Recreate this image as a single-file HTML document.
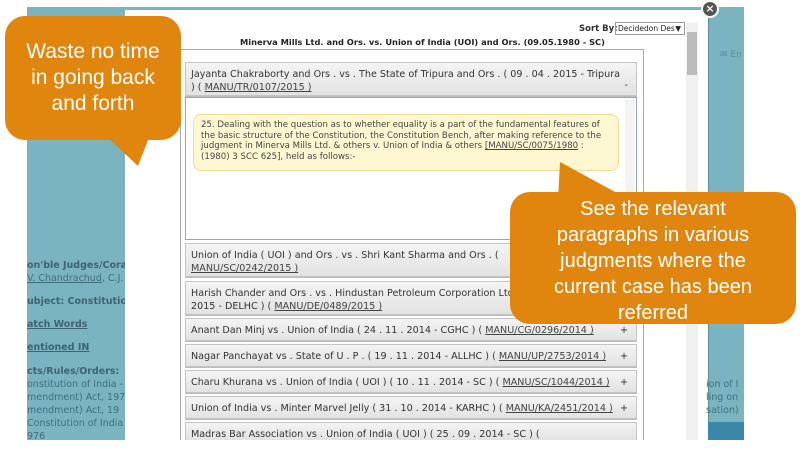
<!DOCTYPE html>
<html><head><style>
*{margin:0;padding:0;box-sizing:border-box}
body{width:800px;height:458px;background:#fff;position:relative;overflow:hidden;font-family:"DejaVu Sans","Liberation Sans",sans-serif}
.abs{position:absolute}
.teal{left:27px;top:7px;width:717px;height:433px;background:#7ab4c1}
.modal{left:125px;top:10px;width:584px;height:430px;background:#fff;border-right:1px solid #5a8d99}
.side{font-size:9.5px;color:#3f6f7c;left:27px;width:98px;white-space:nowrap;overflow:hidden}
.side b{color:#3d6470}
.item{left:185px;width:452px;background:linear-gradient(#f4f4f4,#e2e2e2);border:1px solid #c4c4c4;font-size:9.6px;color:#333;padding:5px 5px;line-height:13px;box-shadow:0 1px 0 #bbb;white-space:nowrap;overflow:hidden}
.item u{color:#444}
.plus{position:absolute;right:8px;top:5px}
.bub{background:#e0860e;color:#fff;font-family:"Liberation Sans",sans-serif;text-align:center;border-radius:20px}
</style></head><body>
<div class="abs teal"></div>
<div class="abs modal"></div>
<div class="abs" style="left:701px;top:0;width:18px;height:18px;border-radius:50%;background:#555;border:2px solid #fff;color:#fff;font-size:11px;text-align:center;line-height:14px;font-weight:bold">×</div>
<div class="abs" style="left:720px;top:50px;font-size:9px;color:#5b8d99">✉ En</div>
<div class="abs side" style="top:260px"><b>on'ble Judges/Cora</b></div>
<div class="abs side" style="top:273px"><u>V. Chandrachud</u>, C.J.</div>
<div class="abs side" style="top:296px"><b>ubject: Constitution</b></div>
<div class="abs side" style="top:319px"><b><u>atch Words</u></b></div>
<div class="abs side" style="top:342px"><b><u>entioned IN</u></b></div>
<div class="abs side" style="top:365px;line-height:13px"><b>cts/Rules/Orders:</b><br>onstitution of India -<br>mendment) Act, 197<br>mendment) Act, 19<br>Constitution of India<br>976</div>
<div class="abs" style="left:706px;top:378px;font-size:9.5px;color:#3f6f7c;line-height:13px;width:38px;overflow:hidden;white-space:nowrap">ion of I<br>ling on<br>sation)</div>
<div class="abs" style="left:708px;top:422px;width:36px;height:18px;background:#3a87a8"></div>
<div class="abs" style="left:579px;top:24px;font-size:8.5px;font-weight:bold;color:#333;white-space:nowrap">Sort By:</div>
<div class="abs" style="left:615px;top:22px;width:70px;height:13px;border:1px solid #999;font-size:7.5px;padding-left:2px;line-height:11px;color:#222;white-space:nowrap;overflow:hidden">Decidedon Des<span style="position:absolute;right:3px;top:0">▼</span></div>
<div class="abs" style="left:240px;top:37px;font-size:8.3px;font-weight:bold;color:#222;white-space:nowrap">Minerva Mills Ltd. and Ors. vs. Union of India (UOI) and Ors. (09.05.1980 - SC)</div>
<div class="abs" style="left:686px;top:23px;width:12px;height:417px;background:#f0f0f0"></div>
<div class="abs" style="left:687px;top:32px;width:10px;height:43px;background:#bcbcbc"></div>
<div class="abs" style="left:180px;top:49px;width:464px;height:391px;border:1px solid #aaa;border-bottom:none"></div>
<div class="abs item" style="top:62px;height:34px">Jayanta Chakraborty and Ors . vs . The State of Tripura and Ors . ( 09 . 04 . 2015 - Tripura<br>) ( <u>MANU/TR/0107/2015 )</u><span class="plus" style="top:16px">-</span></div>
<div class="abs" style="left:185px;top:97px;width:452px;height:143px;border:1px solid #8aa8c8;background:#fff"></div>
<div class="abs" style="left:625px;top:100px;width:10px;height:138px;background:#f4f4f4"></div>
<div class="abs" style="left:193px;top:114px;width:426px;height:57px;background:#fdf8d2;border:1px solid #f2dc94;border-radius:8px;font-size:8.6px;color:#444;padding:5px 7px;line-height:10.5px">25. Dealing with the question as to whether equality is a part of the fundamental features of the basic structure of the Constitution, the Constitution Bench, after making reference to the judgment in Minerva Mills Ltd. &amp; others v. Union of India &amp; others <u>[MANU/SC/0075/1980</u> : (1980) 3 SCC 625], held as follows:-</div>
<div class="abs item" style="top:243px;height:34px">Union of India ( UOI ) and Ors . vs . Shri Kant Sharma and Ors . ( <br><u>MANU/SC/0242/2015 )</u></div>
<div class="abs item" style="top:281px;height:34px">Harish Chander and Ors . vs . Hindustan Petroleum Corporation Ltd<br>2015 - DELHC ) ( <u>MANU/DE/0489/2015 )</u></div>
<div class="abs item" style="top:318px;height:23px">Anant Dan Minj vs . Union of India ( 24 . 11 . 2014 - CGHC ) ( <u>MANU/CG/0296/2014 )</u><span class="plus">+</span></div>
<div class="abs item" style="top:344px;height:23px">Nagar Panchayat vs . State of U . P . ( 19 . 11 . 2014 - ALLHC ) ( <u>MANU/UP/2753/2014 )</u><span class="plus">+</span></div>
<div class="abs item" style="top:370px;height:23px">Charu Khurana vs . Union of India ( UOI ) ( 10 . 11 . 2014 - SC ) ( <u>MANU/SC/1044/2014 )</u><span class="plus">+</span></div>
<div class="abs item" style="top:396px;height:23px">Union of India vs . Minter Marvel Jelly ( 31 . 10 . 2014 - KARHC ) ( <u>MANU/KA/2451/2014 )</u><span class="plus">+</span></div>
<div class="abs item" style="top:422px;height:20px">Madras Bar Association vs . Union of India ( UOI ) ( 25 . 09 . 2014 - SC ) (</div>
<div class="abs" style="left:0;top:440px;width:800px;height:18px;background:#fff"></div>
<svg class="abs" style="left:0;top:0" width="800" height="458">
<polygon points="105,135 150,135 138,166" fill="#e0860e"/>
<polygon points="560,162 558,200 630,200" fill="#e0860e"/>
</svg>
<div class="abs bub" style="left:5px;top:16px;width:176px;height:124px;font-size:21px;line-height:26px;padding-top:23px">Waste no time<br>in going back<br>and forth</div>
<div class="abs bub" style="left:510px;top:192px;width:286px;height:132px;font-size:20px;line-height:26px;padding-top:4px">See the relevant<br>paragraphs in various<br>judgments where the<br>current case has been<br>referred</div>
</body></html>
